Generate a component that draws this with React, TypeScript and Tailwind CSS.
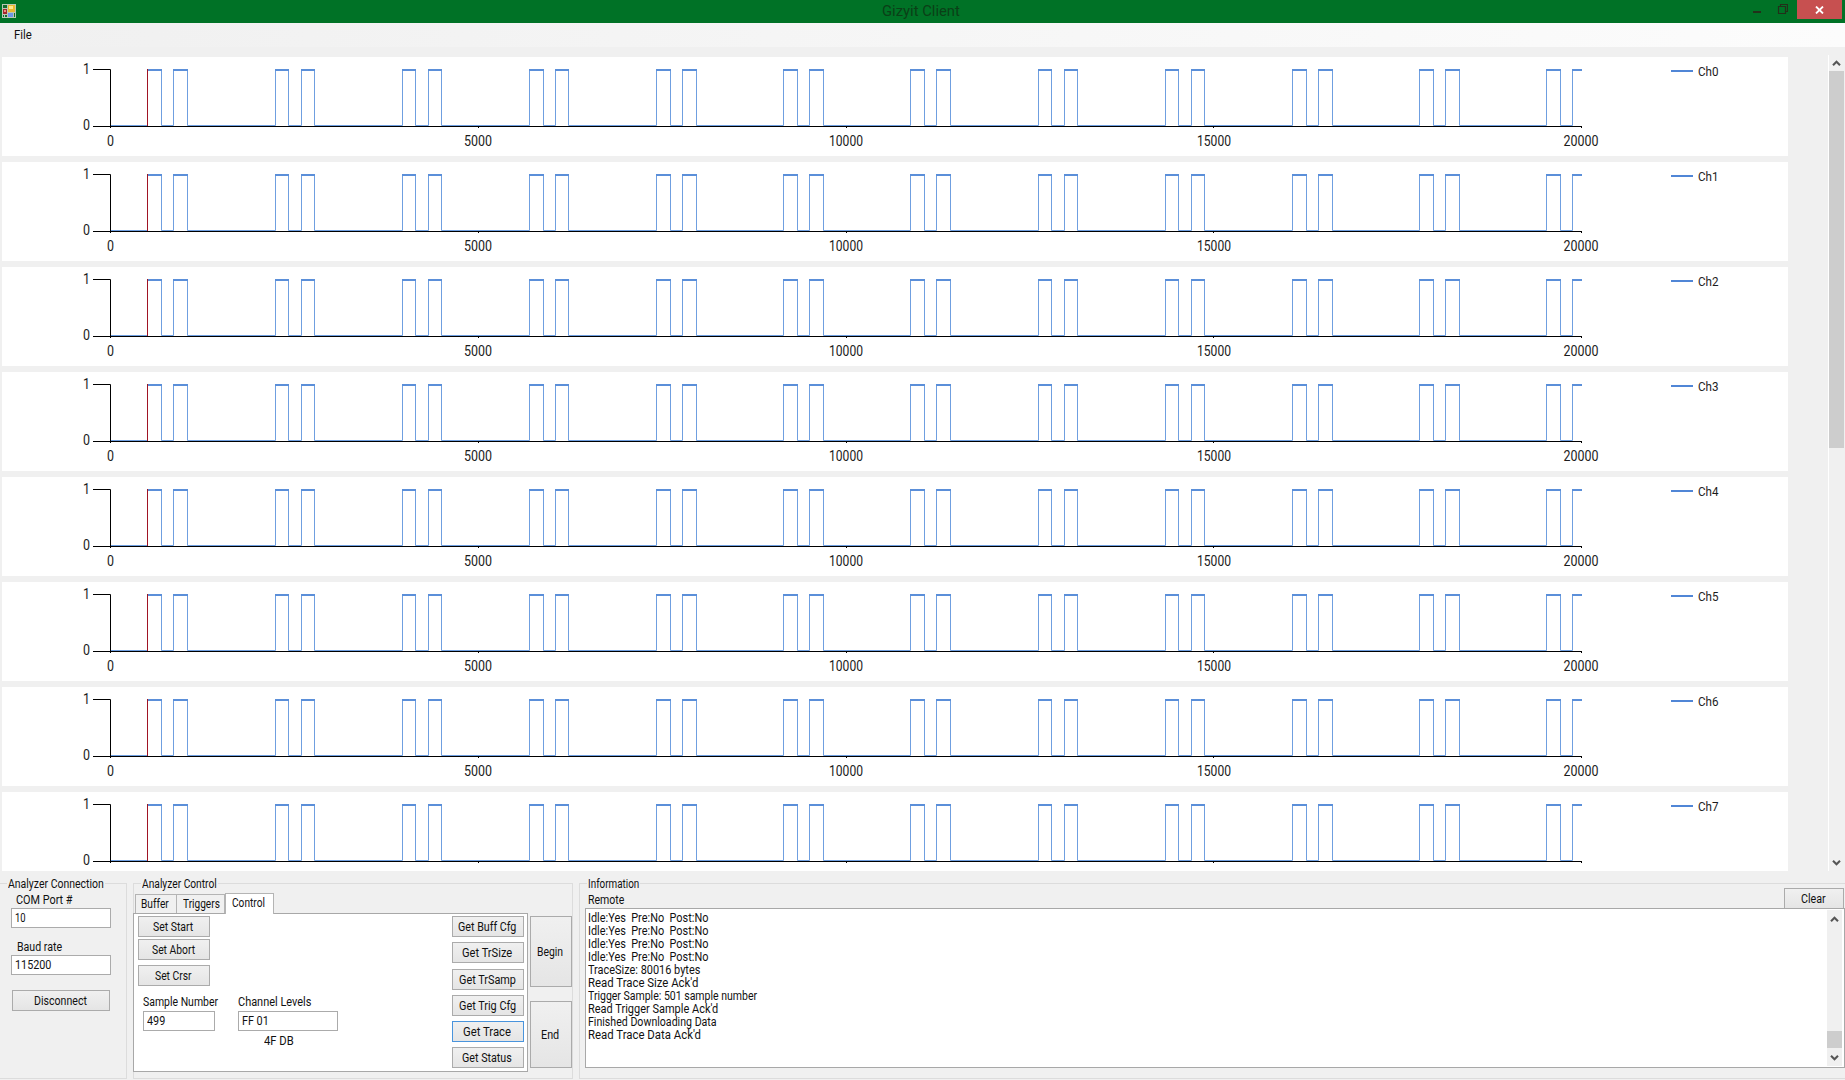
import { useLayoutEffect, useRef } from "react";
import type { ReactNode } from "react";

/* Text condensed or stretched to an exact pixel width, like GDI-hinted UI text. */
function Fit({ w, children, className = "" }: { w: number; children: string; className?: string }) {
  const ref = useRef<HTMLSpanElement>(null);
  useLayoutEffect(() => {
    const el = ref.current;
    if (el) el.style.transform = `scaleX(${w / el.offsetWidth})`;
  }, [w, children]);
  return (
    <span className={`block ${className}`} style={{ width: w }}>
      <span ref={ref} className="inline-block origin-left whitespace-pre">{children}</span>
    </span>
  );
}

function Btn({ label, w, className = "" }: { label: string; w: number; className?: string }) {
  return (
    <button className={`flex shrink-0 items-center justify-center border bg-linear-to-b from-[#f0f0f0] to-[#e5e5e5] pt-px pr-[2px] ${className}`}>
      <Fit w={w}>{label}</Fit>
    </button>
  );
}

function Field({ value, w, className = "" }: { value: string; w: number; className?: string }) {
  return (
    <div className={`flex h-5 items-center border border-[#ababab] bg-white pl-[3px] ${className}`}>
      <Fit w={w}>{value}</Fit>
    </div>
  );
}

function Group({ title, w, className = "", children }: { title: string; w: number; className?: string; children: ReactNode }) {
  return (
    <fieldset className={`relative mt-[12px] h-[196px] min-w-0 shrink-0 border border-[#dcdcdc] ${className}`}>
      <div className="absolute -top-[8px] left-[7px] bg-[#f0f0f0] px-px leading-4">
        <Fit w={w}>{title}</Fit>
      </div>
      {children}
    </fieldset>
  );
}

function Arrow({ down = false }: { down?: boolean }) {
  return (
    <svg width="9" height="7" viewBox="0 0 9 7" className={down ? "rotate-180" : ""}>
      <path d="M1 5.2 4.5 1.8 8 5.2" fill="none" stroke="#555" strokeWidth="2.1" />
    </svg>
  );
}

const PERIOD = 127.18;
const START = 145.9;
const HIGH = 12.5;
const LOW = 68.5;

function wavePath() {
  let d = `M108.5 ${LOW}`;
  for (let i = 0; i < 12; i++) {
    const x = START + i * PERIOD;
    const e = [x, x + 13.6, x + 26, x + 39.5].map((v) => Math.floor(v) + 0.5);
    d += `H${e[0]}V${HIGH}H${e[1]}V${LOW}H${e[2]}V${HIGH}`;
    d += i < 11 ? `H${e[3]}V${LOW}` : "H1580";
  }
  return d;
}

function topsPath() {
  let d = "";
  for (let i = 0; i < 12; i++) {
    const x = START + i * PERIOD;
    const a = Math.floor(x);
    const b = Math.floor(x + 26);
    d += `M${a} 13H${Math.floor(x + 13.6) + 1}M${b} 13H${i < 11 ? Math.floor(x + 39.5) + 1 : 1580}`;
  }
  return d;
}

const WAVE = wavePath();
const TOPS = topsPath();
const TICKS = [
  { x: 108.5, t: "0", w: 7 },
  { x: 476, t: "5000", w: 28 },
  { x: 844, t: "10000", w: 34 },
  { x: 1212, t: "15000", w: 34 },
  { x: 1579, t: "20000", w: 35 },
];

function Channel({ n, labels }: { n: number; labels: boolean }) {
  return (
    <svg width="1786" height="99" viewBox="0 0 1786 99" className="block shrink-0 bg-white text-[14px]" fill="#1c1c1c">
      <path d={WAVE} fill="none" stroke="#6f9fe0" strokeWidth="1" />
      <path d={TOPS} fill="none" stroke="#5b8fd9" strokeWidth="2" />
      <path d="M145.5 12V70" stroke="#a01424" strokeWidth="1" />
      <path d="M91 12.5H108.5V71M91 69.5H1580M476.5 69V71M844.5 69V71M1211.5 69V71M1579.5 69V71" fill="none" stroke="#000" strokeWidth="1" />
      <text x="81" y="17" textLength="7" lengthAdjust="spacingAndGlyphs">1</text>
      <text x="81" y="73" textLength="7" lengthAdjust="spacingAndGlyphs">0</text>
      {labels && TICKS.map((k) => (
        <text key={k.t} x={k.x - k.w / 2} y="89.4" textLength={k.w} lengthAdjust="spacingAndGlyphs">{k.t}</text>
      ))}
      <path d="M1669 14H1691" stroke="#5086d6" strokeWidth="2" />
      <text x="1696" y="19" fontSize="12.5" textLength="20.5" lengthAdjust="spacingAndGlyphs">{`Ch${n}`}</text>
    </svg>
  );
}

const LOG: [string, number][] = [
  ["Idle:Yes  Pre:No  Post:No", 120],
  ["Idle:Yes  Pre:No  Post:No", 120],
  ["Idle:Yes  Pre:No  Post:No", 120],
  ["Idle:Yes  Pre:No  Post:No", 120],
  ["TraceSize: 80016 bytes", 112],
  ["Read Trace Size Ack'd", 110],
  ["Trigger Sample: 501 sample number", 169],
  ["Read Trigger Sample Ack'd", 130],
  ["Finished Downloading Data", 129],
  ["Read Trace Data Ack'd", 113],
];

export default function App() {
  return (
    <div className="flex h-[1080px] w-[1845px] flex-col overflow-hidden bg-[#f0f0f0] font-['Roboto',sans-serif] text-[12px] leading-[13px] text-[#111]">
      <header className="flex h-[23px] shrink-0 items-start bg-[#007226]">
        <svg width="14" height="14" viewBox="0 0 14 14" className="mt-1 ml-[2px] shrink-0">
          <rect width="14" height="14" fill="#b9c8b4" />
          <rect x="1" y="1" width="4" height="3" fill="#126b2c" />
          <rect x="1" y="5" width="4" height="5" fill="#a3262b" />
          <rect x="2" y="6" width="2" height="2" fill="#ee8a80" />
          <rect x="6" y="1" width="7" height="7" fill="#e8b830" />
          <rect x="7" y="2" width="4" height="3" fill="#ffe88a" />
          <rect x="6" y="9" width="5" height="4" fill="#6f97e8" />
          <rect x="1" y="11" width="1" height="2" fill="#126b2c" />
          <rect x="3" y="11" width="2" height="2" fill="#126b2c" />
          <rect x="12" y="9" width="1" height="4" fill="#126b2c" />
        </svg>
        <div className="ml-[866px] text-[15px] leading-[23px] text-[#0b3f17]">
          <Fit w={78}>Gizyit Client</Fit>
        </div>
        <svg width="36" height="19" viewBox="0 0 36 19" className="ml-auto shrink-0" fill="none" stroke="#22301a">
          <path d="M1 12H9" strokeWidth="2" />
          <path d="M26.5 6.5H33.5V13.5H26.5ZM28.5 6V4.5H35.5V11.5H34" strokeWidth="1.2" />
        </svg>
        <div className="mr-[3px] ml-[9px] flex h-[19px] w-[45px] shrink-0 items-center justify-center bg-[#c75050]">
          <svg width="9" height="8" viewBox="0 0 9 8">
            <path d="M1 .5 8 7.5M8 .5 1 7.5" stroke="#fff" strokeWidth="1.8" />
          </svg>
        </div>
      </header>
      <nav className="flex h-6 shrink-0 items-center bg-linear-to-r from-[#f0f0f0] to-[#fcfcfc] pl-[14px]">
        <Fit w={18}>File</Fit>
      </nav>

      <main className="mt-[8px] flex h-[816px] shrink-0 overflow-hidden">
        <div className="mt-[2px] ml-[2px] flex w-[1786px] flex-col gap-[6px] overflow-hidden">
          {[0, 1, 2, 3, 4, 5, 6, 7].map((n) => <Channel key={n} n={n} labels={n < 7} />)}
        </div>
        <div className="mr-px ml-auto flex w-[16px] flex-col items-center border-l border-white pt-[5px] pb-[5px]">
          <Arrow />
          <div className="mt-1 h-[377px] w-[15px] bg-[#cdcdcd]" />
          <div className="grow" />
          <Arrow down />
        </div>
      </main>

      <section className="flex h-[209px] shrink-0">
        <Group title="Analyzer Connection" w={96} className="w-[127px] border-l-0">
          <div className="flex flex-col items-start pt-[11px] pl-[11px]">
            <Fit w={57} className="-mt-px mb-px ml-[5px]">COM Port #</Fit>
            <Field value="10" w={11} className="w-[100px]" />
            <Fit w={45} className="mt-[13px] mb-px ml-[6px]">Baud rate</Fit>
            <Field value="115200" w={36} className="w-[100px]" />
            <Btn label="Disconnect" w={53} className="mt-[15px] ml-px h-[21px] w-[98px] border-[#ababab]" />
          </div>
        </Group>

        <Group title="Analyzer Control" w={75} className="ml-[6px] w-[440px]">
          <div className="flex">
            <div className="-ml-px w-[395px] shrink-0 pt-[8px]">
              <div className="flex h-[21px] items-end pl-[2px]">
                <div className="flex h-[19px] w-[42px] items-center border border-b-0 border-[#b4b4b4] pt-px pl-[5px]"><Fit w={28}>Buffer</Fit></div>
                <div className="flex h-[19px] w-[48px] items-center border border-l-0 border-b-0 border-[#b4b4b4] pt-px pl-[6px]"><Fit w={37}>Triggers</Fit></div>
                <div className="relative z-10 -mb-px flex h-[21px] w-[49px] items-center border border-b-0 border-[#b4b4b4] bg-white pb-px pl-[6px]"><Fit w={33}>Control</Fit></div>
              </div>
              <div className="flex h-[159px] justify-between border border-[#a8a8a8] bg-white pt-[2px] pr-[3px] pl-[4px]">
                <div>
                  <Btn label="Set Start" w={40} className="h-[21px] w-[72px] border-[#ababab]" />
                  <Btn label="Set Abort" w={43} className="mt-[2px] h-[21px] w-[72px] border-[#ababab]" />
                  <Btn label="Set Crsr" w={37} className="mt-[5px] h-[21px] w-[72px] border-[#ababab]" />
                  <div className="mt-[10px] ml-[5px] flex gap-[20px]">
                    <div>
                      <Fit w={75}>Sample Number</Fit>
                      <Field value="499" w={18} className="mt-[2px] w-[72px]" />
                    </div>
                    <div>
                      <Fit w={73}>Channel Levels</Fit>
                      <Field value="FF 01" w={27} className="mt-[2px] w-[100px]" />
                      <Fit w={30} className="mt-[4px] ml-[26px]">4F DB</Fit>
                    </div>
                  </div>
                </div>
                <div>
                  <Btn label="Get Buff Cfg" w={58} className="h-[21px] w-[72px] border-[#ababab]" />
                  <Btn label="Get TrSize" w={50} className="mt-[5px] h-[21px] w-[72px] border-[#ababab]" />
                  <Btn label="Get TrSamp" w={57} className="mt-[6px] h-[21px] w-[72px] border-[#ababab]" />
                  <Btn label="Get Trig Cfg" w={57} className="mt-[5px] h-[21px] w-[72px] border-[#ababab]" />
                  <Btn label="Get Trace" w={48} className="mt-[5px] h-[21px] w-[72px] border-[#4a94dc]" />
                  <Btn label="Get Status" w={50} className="mt-[5px] h-[21px] w-[72px] border-[#ababab]" />
                </div>
              </div>
            </div>
            <div className="ml-[2px] pt-[32px]">
              <Btn label="Begin" w={26} className="h-[71px] w-[42px] border-[#ababab]" />
              <Btn label="End" w={18} className="mt-[14px] h-[67px] w-[42px] border-[#ababab]" />
            </div>
          </div>
        </Group>

        <Group title="Information" w={51} className="ml-[6px] w-[1268px]">
          <div className="flex h-[24px] items-end justify-between pr-[2px] pl-[8px]">
            <Fit w={36} className="mb-px">Remote</Fit>
            <Btn label="Clear" w={25} className="h-[20px] w-[60px] border-b-0 border-[#ababab]" />
          </div>
          <div className="ml-[5px] flex h-[160px] w-[1260px] justify-between border border-[#a8a8a8] bg-white">
            <div className="pt-[3px] pl-[2px]">
              {LOG.map(([t, w], i) => <Fit key={i} w={w} className="h-[13px]">{t}</Fit>)}
            </div>
            <div className="my-px mr-[2px] flex w-[15px] flex-col items-center bg-[#f0f0f0] pt-[6px] pb-[5px]">
              <Arrow />
              <div className="grow" />
              <div className="mb-[6px] h-[17px] w-[15px] bg-[#cdcdcd]" />
              <Arrow down />
            </div>
          </div>
        </Group>
      </section>
    </div>
  );
}
